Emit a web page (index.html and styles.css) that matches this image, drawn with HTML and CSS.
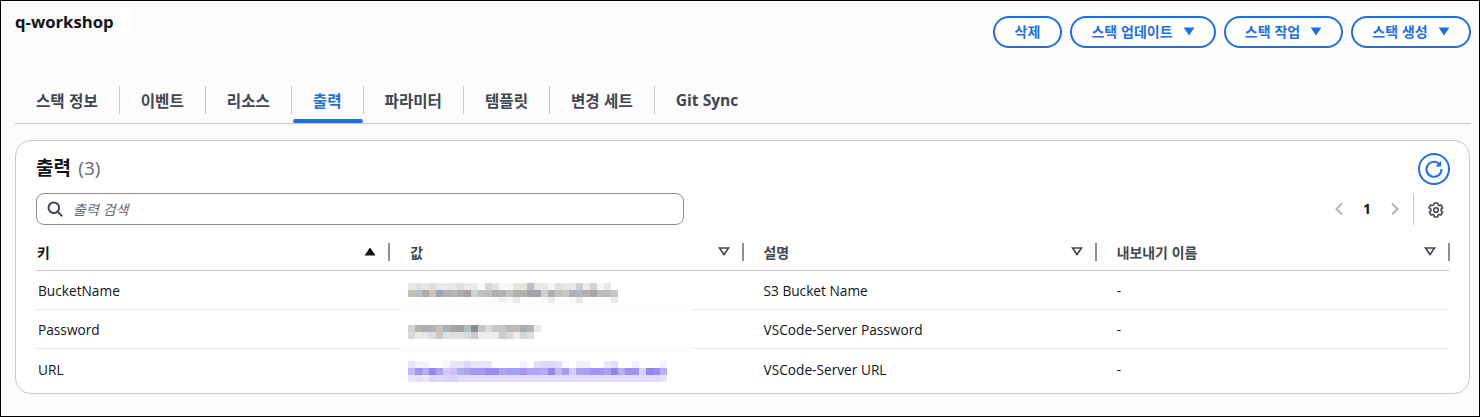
FILE: index.html
```html
<!DOCTYPE html>
<html lang="ko">
<head>
<meta charset="utf-8">
<title>q-workshop</title>
<link rel="stylesheet" href="styles.css">
</head>
<body>
<div class="frame">
  <header class="top">
    <h1 class="stack-name">q-workshop<span class="patch"></span></h1>
    <div class="actions">
      <button class="btn b1">삭제</button>
      <button class="btn b2">스택 업데이트<svg class="caret" viewBox="0 0 12 9"><path d="M0.5 0.5h11L6 8.5z"/></svg></button>
      <button class="btn b3">스택 작업<svg class="caret" viewBox="0 0 12 9"><path d="M0.5 0.5h11L6 8.5z"/></svg></button>
      <button class="btn b4">스택 생성<svg class="caret" viewBox="0 0 12 9"><path d="M0.5 0.5h11L6 8.5z"/></svg></button>
    </div>
  </header>
  <nav class="tabs">
    <a class="tab">스택 정보</a>
    <a class="tab">이벤트</a>
    <a class="tab">리소스</a>
    <a class="tab active">출력</a>
    <a class="tab">파라미터</a>
    <a class="tab">템플릿</a>
    <a class="tab">변경 세트</a>
    <a class="tab last">Git Sync</a>
  </nav>
  <section class="panel">
    <div class="panel-head">
      <h2 class="panel-title">출력 <span class="count">(3)</span></h2>
      <button class="refresh" aria-label="새로 고침">
        <svg viewBox="0 0 20 20" width="20" height="20"><path class="ref-line" d="M15.4 5.1A7.5 7.5 0 1 0 17.5 10"/><path class="ref-fill" d="M17.2 1.8v5.6h-5.6z"/></svg>
      </button>
    </div>
    <div class="tools">
      <div class="search">
        <svg class="search-icon" viewBox="0 0 16 16" width="16" height="16"><circle cx="6.8" cy="6.8" r="5.3"/><path d="M10.6 10.6l4.6 4.6"/></svg>
        <span class="placeholder">출력 검색</span>
      </div>
      <div class="pager">
        <svg class="chev" viewBox="0 0 10 14" width="10" height="14"><path d="M8 1.5L2.5 7 8 12.5"/></svg>
        <span class="page-no">1</span>
        <svg class="chev" viewBox="0 0 10 14" width="10" height="14"><path d="M2 1.5L7.5 7 2 12.5"/></svg>
        <span class="pager-sep"></span>
        <svg class="gear" viewBox="0 0 16 16" width="16" height="16"><path d="M6.4 1h3.200l.4 1.900 1.200.7 1.800-.6 1.600 2.800-1.400 1.300v1.800l1.400 1.300-1.600 2.800-1.800-.6-1.200.7-.4 1.900H6.400l-.4-1.900-1.200-.7-1.800.6-1.600-2.800 1.400-1.300V7.100L1 5.800 2.600 3l1.800.6 1.200-.7z"/><circle cx="8" cy="8" r="2.300"/></svg>
      </div>
    </div>
    <div class="table">
      <div class="th"><span>키</span><svg class="sort" viewBox="0 0 12 9"><path class="solid" d="M6 .5l5.500 8H.5z"/></svg></div>
      <div class="th"><span>값</span><svg class="sort" viewBox="0 0 12 9"><path d="M1.500 1h9L6 7.500z"/></svg></div>
      <div class="th"><span>설명</span><svg class="sort" viewBox="0 0 12 9"><path d="M1.500 1h9L6 7.500z"/></svg></div>
      <div class="th"><span>내보내기 이름</span><svg class="sort" viewBox="0 0 12 9"><path d="M1.500 1h9L6 7.500z"/></svg></div>

      <div class="td">BucketName</div>
      <div class="td val">
        <svg class="blur" width="210" height="21" viewBox="0 0 30 3" shape-rendering="crispEdges">
          <g>
            <rect x="0" y="0" width="1" height="1" fill="#e8e8e8"/><rect x="1" y="0" width="1" height="1" fill="#e0e2e0"/><rect x="2" y="0" width="1" height="1" fill="#e8e8e6"/><rect x="3" y="0" width="1" height="1" fill="#e0e0e0"/><rect x="4" y="0" width="2" height="1" fill="#eaeaea"/><rect x="6" y="0" width="1" height="1" fill="#e6e6e6"/><rect x="7" y="0" width="1" height="1" fill="#e2e0e0"/><rect x="8" y="0" width="2" height="1" fill="#eaeaea"/><rect x="10" y="0" width="1" height="1" fill="#fafafa"/><rect x="11" y="0" width="1" height="1" fill="#d6d6d4"/><rect x="12" y="0" width="1" height="1" fill="#e4e4e4"/><rect x="13" y="0" width="2" height="1" fill="#f7f8f8"/><rect x="15" y="0" width="1" height="1" fill="#e6e6e2"/><rect x="16" y="0" width="1" height="1" fill="#e6e6e0"/><rect x="17" y="0" width="1" height="1" fill="#bcc0c8"/><rect x="18" y="0" width="1" height="1" fill="#e8e6e4"/><rect x="19" y="0" width="1" height="1" fill="#e8e8e6"/><rect x="20" y="0" width="1" height="1" fill="#f4f6f6"/><rect x="21" y="0" width="1" height="1" fill="#e2e2e0"/><rect x="22" y="0" width="1" height="1" fill="#e6e8e8"/><rect x="23" y="0" width="1" height="1" fill="#e8e8e8"/><rect x="24" y="0" width="1" height="1" fill="#cecece"/><rect x="25" y="0" width="1" height="1" fill="#ececea"/><rect x="26" y="0" width="1" height="1" fill="#d2d0d0"/><rect x="27" y="0" width="1" height="1" fill="#f4f6f6"/><rect x="28" y="0" width="1" height="1" fill="#e4e8e8"/>
            <rect x="0" y="1" width="1" height="1" fill="#c6bfb8"/><rect x="1" y="1" width="1" height="1" fill="#b6c0c8"/><rect x="2" y="1" width="1" height="1" fill="#acacac"/><rect x="3" y="1" width="1" height="1" fill="#ccc4b8"/><rect x="4" y="1" width="1" height="1" fill="#9ea4ae"/><rect x="5" y="1" width="1" height="1" fill="#aeb2b4"/><rect x="6" y="1" width="1" height="1" fill="#b4b6b8"/><rect x="7" y="1" width="1" height="1" fill="#aeaaaa"/><rect x="8" y="1" width="1" height="1" fill="#a8a2a2"/><rect x="9" y="1" width="1" height="1" fill="#ccd4d0"/><rect x="10" y="1" width="1" height="1" fill="#c0c0be"/><rect x="11" y="1" width="1" height="1" fill="#bebebc"/><rect x="12" y="1" width="1" height="1" fill="#acaeb4"/><rect x="13" y="1" width="1" height="1" fill="#b2b4b8"/><rect x="14" y="1" width="1" height="1" fill="#c4c4c2"/><rect x="15" y="1" width="1" height="1" fill="#b2b2ae"/><rect x="16" y="1" width="1" height="1" fill="#aeb2ac"/><rect x="17" y="1" width="2" height="1" fill="#a2a4aa"/><rect x="19" y="1" width="1" height="1" fill="#d2d0cc"/><rect x="20" y="1" width="1" height="1" fill="#aeaeb2"/><rect x="21" y="1" width="1" height="1" fill="#c2c0c0"/><rect x="22" y="1" width="1" height="1" fill="#ccc8c0"/><rect x="23" y="1" width="1" height="1" fill="#aeb0b4"/><rect x="24" y="1" width="1" height="1" fill="#b2b8be"/><rect x="25" y="1" width="1" height="1" fill="#b2b0b2"/><rect x="26" y="1" width="1" height="1" fill="#a8a2a0"/><rect x="27" y="1" width="2" height="1" fill="#bcbcbc"/><rect x="29" y="1" width="1" height="1" fill="#c2c8ce"/>
            <rect x="12" y="2" width="1" height="1" fill="#fcfaf8"/><rect x="13" y="2" width="1" height="1" fill="#f0f2f4"/><rect x="14" y="2" width="1" height="1" fill="#f8f6f4"/><rect x="15" y="2" width="1" height="1" fill="#e8eaec"/><rect x="19" y="2" width="1" height="1" fill="#fcfaf6"/><rect x="20" y="2" width="1" height="1" fill="#eceef2"/><rect x="23" y="2" width="1" height="1" fill="#f8f6f4"/><rect x="24" y="2" width="1" height="1" fill="#e6e8ea"/><rect x="29" y="2" width="1" height="1" fill="#e8eaea"/>
          </g>
        </svg>
      </div>
      <div class="td">S3 Bucket Name</div>
      <div class="td">-</div>

      <div class="td">Password</div>
      <div class="td val">
        <svg class="blur blur2" width="133" height="14" viewBox="0 0 19 2" shape-rendering="crispEdges">
          <rect x="0" y="0" width="1" height="1" fill="#d8d2cc"/><rect x="1" y="0" width="1" height="1" fill="#bab4ae"/><rect x="2" y="0" width="1" height="1" fill="#a8b0b6"/><rect x="3" y="0" width="1" height="1" fill="#b4b2b2"/><rect x="4" y="0" width="1" height="1" fill="#c6c0b8"/><rect x="5" y="0" width="1" height="1" fill="#a6b2bc"/><rect x="6" y="0" width="1" height="1" fill="#a8a4a4"/><rect x="7" y="0" width="1" height="1" fill="#a4a0a0"/><rect x="8" y="0" width="1" height="1" fill="#b2bec0"/><rect x="9" y="0" width="1" height="1" fill="#888a8e"/><rect x="10" y="0" width="1" height="1" fill="#c4c6c4"/><rect x="11" y="0" width="1" height="1" fill="#dadad8"/><rect x="12" y="0" width="2" height="1" fill="#c6c6ca"/><rect x="14" y="0" width="1" height="1" fill="#bab6b6"/><rect x="15" y="0" width="1" height="1" fill="#c4bcb2"/><rect x="16" y="0" width="1" height="1" fill="#a6aeb8"/><rect x="17" y="0" width="1" height="1" fill="#bab2ac"/><rect x="18" y="0" width="1" height="1" fill="#e4eaf2"/>
          <rect x="0" y="1" width="1" height="1" fill="#dadada"/><rect x="1" y="1" width="1" height="1" fill="#ecebe8"/><rect x="2" y="1" width="1" height="1" fill="#e4e6ea"/><rect x="3" y="1" width="1" height="1" fill="#dcdcdc"/><rect x="4" y="1" width="1" height="1" fill="#cccac8"/><rect x="5" y="1" width="1" height="1" fill="#dce0e8"/><rect x="6" y="1" width="2" height="1" fill="#e0dede"/><rect x="8" y="1" width="1" height="1" fill="#d6dcdc"/><rect x="9" y="1" width="1" height="1" fill="#cccace"/><rect x="10" y="1" width="3" height="1" fill="#eceeec"/><rect x="13" y="1" width="1" height="1" fill="#ccccd0"/><rect x="14" y="1" width="1" height="1" fill="#d8d6d6"/><rect x="15" y="1" width="1" height="1" fill="#ececea"/><rect x="16" y="1" width="1" height="1" fill="#d2d4da"/><rect x="17" y="1" width="1" height="1" fill="#dedede"/>
        </svg>
      </div>
      <div class="td">VSCode-Server Password</div>
      <div class="td">-</div>

      <div class="td">URL</div>
      <div class="td val">
        <svg class="blur blur3" width="259" height="21" viewBox="0 0 37 3" shape-rendering="crispEdges">
          <rect x="0" y="0" width="1" height="1" fill="#e6e2fa"/><rect x="1" y="0" width="2" height="1" fill="#f4f2fd"/><rect x="5" y="0" width="1" height="1" fill="#f8f6fe"/><rect x="6" y="0" width="2" height="1" fill="#e8e4fa"/><rect x="8" y="0" width="1" height="1" fill="#dcd6f6"/><rect x="9" y="0" width="3" height="1" fill="#e8e4fb"/><rect x="16" y="0" width="1" height="1" fill="#f4f2fe"/><rect x="18" y="0" width="1" height="1" fill="#e2dcf8"/><rect x="19" y="0" width="2" height="1" fill="#dfd9f8"/><rect x="21" y="0" width="1" height="1" fill="#e2dcf8"/><rect x="22" y="0" width="1" height="1" fill="#f8f8fe"/><rect x="24" y="0" width="1" height="1" fill="#f2ecfb"/><rect x="25" y="0" width="1" height="1" fill="#eff2fe"/><rect x="28" y="0" width="1" height="1" fill="#eae6fb"/><rect x="29" y="0" width="1" height="1" fill="#e2def9"/><rect x="32" y="0" width="1" height="1" fill="#f2eefd"/><rect x="36" y="0" width="1" height="1" fill="#f4f2fd"/>
          <rect x="0" y="1" width="1" height="1" fill="#c2baf4"/><rect x="1" y="1" width="1" height="1" fill="#a096f4"/><rect x="2" y="1" width="1" height="1" fill="#b4acf4"/><rect x="3" y="1" width="1" height="1" fill="#9384ef"/><rect x="4" y="1" width="1" height="1" fill="#aaa4f2"/><rect x="5" y="1" width="1" height="1" fill="#d4c8f6"/><rect x="6" y="1" width="1" height="1" fill="#ccc4f6"/><rect x="7" y="1" width="1" height="1" fill="#b2acf4"/><rect x="8" y="1" width="1" height="1" fill="#ada2f2"/><rect x="9" y="1" width="1" height="1" fill="#a298f2"/><rect x="10" y="1" width="1" height="1" fill="#a59bf2"/><rect x="11" y="1" width="2" height="1" fill="#9b8cf0"/><rect x="13" y="1" width="1" height="1" fill="#aca2f2"/><rect x="14" y="1" width="2" height="1" fill="#a3a0f4"/><rect x="16" y="1" width="1" height="1" fill="#a395f0"/><rect x="17" y="1" width="2" height="1" fill="#b0a6f2"/><rect x="19" y="1" width="1" height="1" fill="#b2aaf4"/><rect x="20" y="1" width="1" height="1" fill="#9488ef"/><rect x="21" y="1" width="1" height="1" fill="#c4b8f4"/><rect x="22" y="1" width="1" height="1" fill="#a69cf2"/><rect x="23" y="1" width="1" height="1" fill="#d2ccf8"/><rect x="24" y="1" width="1" height="1" fill="#aea2f2"/><rect x="25" y="1" width="1" height="1" fill="#a2a0f3"/><rect x="26" y="1" width="2" height="1" fill="#a293f2"/><rect x="28" y="1" width="1" height="1" fill="#ae9ff1"/><rect x="29" y="1" width="1" height="1" fill="#8f86f0"/><rect x="30" y="1" width="1" height="1" fill="#b8aef3"/><rect x="31" y="1" width="2" height="1" fill="#a292ef"/><rect x="33" y="1" width="1" height="1" fill="#d8d2f8"/><rect x="34" y="1" width="1" height="1" fill="#9286f0"/><rect x="35" y="1" width="1" height="1" fill="#9b8ef0"/><rect x="36" y="1" width="1" height="1" fill="#b8b0f4"/>
          <rect x="0" y="2" width="1" height="1" fill="#e8e4fb"/><rect x="1" y="2" width="1" height="1" fill="#e2dffa"/><rect x="2" y="2" width="1" height="1" fill="#ebe8fb"/><rect x="3" y="2" width="1" height="1" fill="#dbd6f8"/><rect x="4" y="2" width="1" height="1" fill="#dfd9f8"/><rect x="5" y="2" width="2" height="1" fill="#d9d1f7"/><rect x="7" y="2" width="29" height="1" fill="#dfdbf9"/><rect x="36" y="2" width="1" height="1" fill="#e6e2fb"/>
        </svg>
      </div>
      <div class="td">VSCode-Server URL</div>
      <div class="td">-</div>
    </div>
    <span class="strip s1"></span>
    <span class="strip s2"></span>
  </section>
</div>
</body>
</html>
```
FILE: styles.css
```css
* { box-sizing: border-box; }
html, body { margin: 0; padding: 0; }
body {
  width: 1480px;
  height: 417px;
  overflow: hidden;
  font-family: "Open Sans", "Noto Sans CJK KR", "Noto Sans", sans-serif;
  color: #0f141a;
}
.frame {
  width: 1480px;
  height: 417px;
  border: 1px solid #000;
  background: #fcfcfd;
  padding: 0 8px 0 14px;
  display: flex;
  flex-direction: column;
}
.top {
  display: flex;
  justify-content: space-between;
  align-items: flex-start;
  padding-top: 15px;
  height: 85px;
}
.stack-name {
  margin: -5px 0 0;
  font-size: 16.7px;
  line-height: 22px;
  font-weight: 700;
  position: relative;
  width: 103px;
}
.patch {
  position: absolute;
  left: 103px;
  top: -2px;
  width: 14px;
  height: 24px;
  background: #fff;
}
.actions { display: flex; gap: 8px; }
.btn {
  height: 32px;
  border: 2px solid #1f6fdc;
  border-radius: 16px;
  background: #fff;
  color: #1f6fdc;
  font: 700 14px/18px "Noto Sans CJK KR", sans-serif;
  padding: 0 0 2px;
  display: flex;
  align-items: center;
  justify-content: center;
  gap: 10px;
}
.b1 { width: 69px; }
.b2 { width: 146px; }
.b3 { width: 119px; }
.b4 { width: 120px; }
.caret { width: 12px; height: 9px; fill: #1f6fdc; }
.tabs {
  display: flex;
  height: 38px;
  border-bottom: 1px solid #c6c6cd;
  position: relative;
}
.tab {
  height: 28px;
  padding: 0 21px;
  border-right: 1px solid #c6c6cd;
  font: 700 15.6px/28px "Noto Sans CJK KR", "Open Sans", sans-serif;
  color: #424650;
  white-space: nowrap;
  position: relative;
}
.tab.last { border-right: 0; font-family: "Open Sans", sans-serif; }
.tab.active { color: #1f6fdc; }
.tab.active::after {
  content: "";
  position: absolute;
  left: 1px;
  right: 0;
  top: 33px;
  height: 4px;
  border-radius: 2px;
  background: #1f6fdc;
}
.panel {
  position: relative;
  margin-top: 16px;
  width: 1455px;
  height: 254px;
  background: #fff;
  border: 1px solid #c6c6cd;
  border-radius: 16px;
  padding: 0 20px;
}
.panel-head {
  display: flex;
  justify-content: space-between;
  align-items: flex-start;
  height: 52px;
  padding-top: 11px;
  position: relative;
}
.panel-title {
  margin: 0;
  font: 700 19px/30px "Noto Sans CJK KR", sans-serif;
}
.count { margin-left: 2px; font: 400 19px/30px "Open Sans", sans-serif; color: #656871; }
.refresh {
  width: 32px;
  height: 32px;
  padding: 0;
  margin-top: 1px;
  margin-right: -1px;
  border: 2px solid #1f6fdc;
  border-radius: 50%;
  background: #fff;
  display: flex;
  align-items: center;
  justify-content: center;
}
.ref-line { fill: none; stroke: #1f6fdc; stroke-width: 2; }
.ref-fill { fill: #1f6fdc; }
.tools {
  display: flex;
  justify-content: space-between;
  align-items: center;
  height: 32px;
}
.search {
  width: 648px;
  height: 32px;
  border: 1px solid #8c8c94;
  border-radius: 8px;
  display: flex;
  align-items: center;
  padding-left: 10px;
  gap: 10px;
}
.search-icon { fill: none; stroke: #424650; stroke-width: 2; }
.placeholder {
  font: italic 400 14px/18px "Noto Sans CJK KR", sans-serif;
  color: #656871;
}
.pager {
  display: flex;
  align-items: center;
  height: 32px;
  margin-right: 5px;
}
.chev { fill: none; stroke: #b4b4bb; stroke-width: 2; }
.page-no { width: 46px; text-align: center; font: 700 14px/20px "Open Sans", sans-serif; }
.pager-sep {
  width: 1px;
  height: 32px;
  background: #c6c6cd;
  margin: 0 14px 0 13px;
}
.gear { fill: none; stroke: #424650; stroke-width: 1.6; stroke-linejoin: round; margin-top: 1px; }
.table {
  display: grid;
  grid-template-columns: repeat(4, 1fr);
  grid-template-rows: 46px 39px 39px 39px;
}
.th {
  display: flex;
  align-items: center;
  justify-content: space-between;
  padding: 8px 13px 0 1px;
  font: 700 13.9px/18px "Noto Sans CJK KR", sans-serif;
  color: #424650;
  border-bottom: 1px solid #c6c6cd;
  position: relative;
}
.th:first-child { color: #0f141a; }
.th::after {
  content: "";
  position: absolute;
  right: -1px;
  top: 18px;
  width: 2px;
  height: 18px;
  background: #8c8c94;
}
.th + .th { padding-left: 21px; }
.sort { width: 12px; height: 9px; fill: none; stroke: #424650; stroke-width: 1.6; }
.sort .solid { fill: #0f141a; stroke: none; }
.td {
  display: flex;
  align-items: center;
  padding: 2px 0 0 21px;
  font: 400 13.7px/18px "Open Sans", "Noto Sans CJK KR", sans-serif;
  color: #0f141a;
  border-bottom: 1px solid #e8e8ec;
}
.td:nth-child(4n+1) { padding-left: 2px; }
.td:nth-child(n+13) { border-bottom: 0; }
.td.val { position: relative; }
.blur { position: absolute; left: 18.500px; top: 12px; display: block; }
.blur2 { top: 15px; }
.blur3 { top: 12px; }
.strip {
  position: absolute;
  left: 385px;
  width: 291px;
  background: #fcfcfc;
}
.s1 { top: 162px; height: 8px; }
.s2 { top: 205px; height: 7px; }
```
